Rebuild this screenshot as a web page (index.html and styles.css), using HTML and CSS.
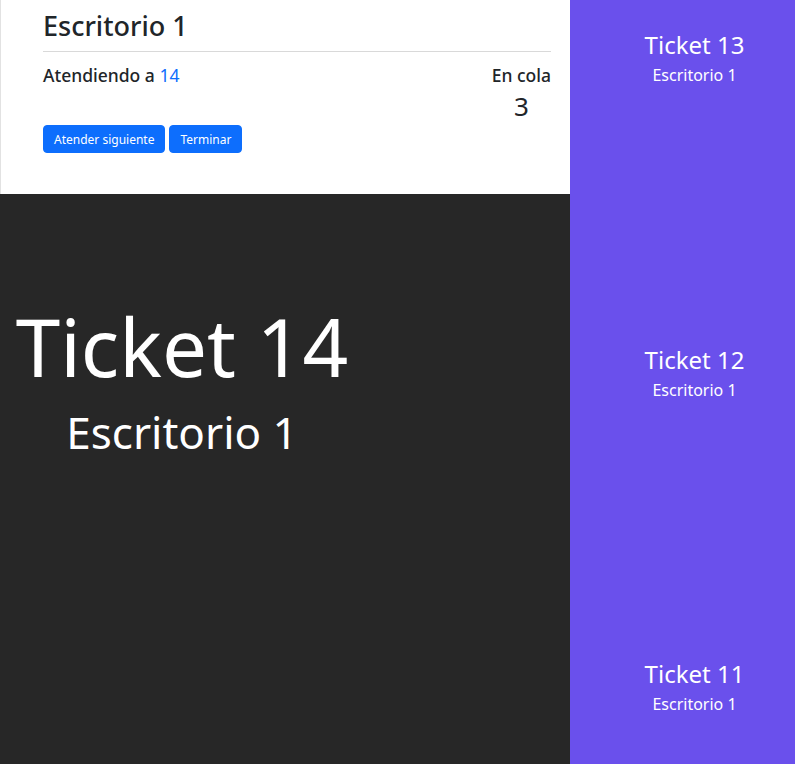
FILE: index.html
```html
<!DOCTYPE html>
<html lang="es">
<head>
<meta charset="utf-8">
<title>Escritorio</title>
<link rel="stylesheet" href="styles.css">
</head>
<body>
<div class="layout">
  <div class="main">
    <section class="panel">
      <h1 class="title">Escritorio 1</h1>
      <hr class="divider">
      <div class="status">
        <div class="attending">Atendiendo a <span class="num">14</span></div>
        <div class="queue">
          <div class="queue-label">En cola</div>
          <div class="queue-count">3</div>
        </div>
      </div>
      <div class="actions">
        <button class="btn">Atender siguiente</button>
        <button class="btn">Terminar</button>
      </div>
    </section>
    <section class="current">
      <div class="current-box">
        <div class="current-ticket">Ticket 14</div>
        <div class="current-desk">Escritorio 1</div>
      </div>
    </section>
  </div>
  <aside class="sidebar">
    <div class="item">
      <div class="item-ticket">Ticket 13</div>
      <div class="item-desk">Escritorio 1</div>
    </div>
    <div class="item">
      <div class="item-ticket">Ticket 12</div>
      <div class="item-desk">Escritorio 1</div>
    </div>
    <div class="item">
      <div class="item-ticket">Ticket 11</div>
      <div class="item-desk">Escritorio 1</div>
    </div>
  </aside>
</div>
</body>
</html>
```
FILE: styles.css
```css
* { box-sizing: border-box; }
html, body { margin: 0; padding: 0; }
body {
  font-family: "Noto Sans", "Open Sans", sans-serif;
  color: #212529;
  overflow: hidden;
}
.layout {
  display: flex;
  height: 764px;
  overflow: hidden;
}
.main {
  width: 570px;
  display: flex;
  flex-direction: column;
}
.panel {
  height: 194px;
  background: #fff;
  border-left: 1px solid #e2e2e2;
  padding: 8px 19px 0 42px;
}
.title {
  margin: 0;
  font-size: 27px;
  font-weight: 500;
  line-height: 36px;
}
.divider {
  margin: 7px 0 0;
  border: 0;
  border-top: 1px solid #d9d9d9;
}
.status {
  display: flex;
  justify-content: space-between;
  margin-top: 11px;
}
.attending {
  font-size: 17.5px;
  font-weight: 500;
  line-height: 24px;
}
.num { color: #0d6efd; font-weight: 400; }
.queue { text-align: center; }
.queue-label {
  font-size: 17.5px;
  font-weight: 500;
  line-height: 24px;
}
.queue-count {
  font-size: 26px;
  line-height: 32px;
  margin-top: 3px;
}
.actions {
  display: flex;
  gap: 4px;
  margin-top: 3px;
}
.btn {
  font-family: inherit;
  font-size: 12px;
  color: #fff;
  background: #0d6efd;
  border: 1px solid #0d6efd;
  border-radius: 4px;
  height: 28px;
  padding: 0 10px;
  cursor: pointer;
}
.current {
  flex: 1;
  background: #272727;
  color: #fff;
  padding-top: 104px;
}
.current-box {
  width: 364px;
  text-align: center;
}
.current-ticket {
  font-size: 80px;
  line-height: 96px;
}
.current-desk {
  font-size: 44px;
  line-height: 56px;
  margin-top: 10px;
}
.sidebar {
  flex: 1;
  background: #6a50ec;
  color: #fff;
  padding-left: 24px;
}
.item {
  height: 314.5px;
  text-align: center;
  padding-top: 30px;
}
.item-ticket {
  font-size: 24px;
  line-height: 30px;
}
.item-desk {
  font-size: 16px;
  line-height: 22px;
  margin-top: 4px;
}
```
